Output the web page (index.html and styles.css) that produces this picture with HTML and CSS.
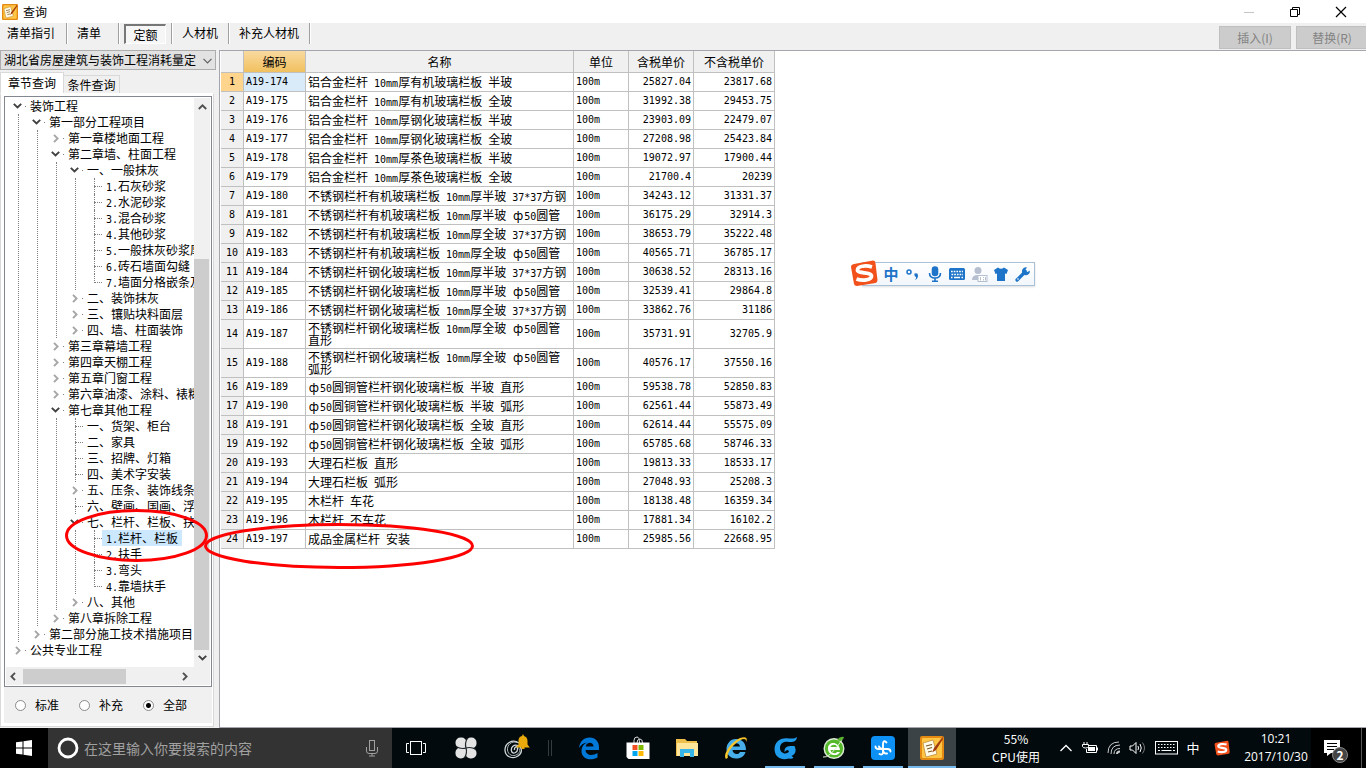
FILE: index.html
```html
<!DOCTYPE html>
<html lang="zh-CN">
<head>
<meta charset="utf-8">
<title>查询</title>
<link rel="stylesheet" href="styles.css">
</head>
<body>
<svg class="defs" aria-hidden="true">
  <symbol id="open" viewBox="0 0 9 6"><path d="M0.8 0.9 4.5 4.5 8.2 0.9" fill="none" stroke="#404040" stroke-width="1.9"/></symbol>
  <symbol id="shut" viewBox="0 0 6 9"><path d="M1 0.8 4.6 4.5 1 8.2" fill="none" stroke="#a6a6a6" stroke-width="1.9"/></symbol>
  <symbol id="sogou" viewBox="0 0 28 28"><path d="M4 5 23 1.5Q25 1.500 25.400 3.500L27.500 21Q27.500 23.500 25.500 24L7 27Q4.500 27 4 25L1 8Q1 5.500 4 5Z" fill="#f2511b"/><path d="M22 8C16 6 7.500 7 7.500 11 7.500 15 21.500 12.500 21.500 17 21.500 21.500 12 22 6.500 20" fill="none" stroke="#fff" stroke-width="3.800"/></symbol>
  <symbol id="note" viewBox="0 0 24 24"><rect width="24" height="24" rx="2" fill="#e48a12"/><rect x="2" y="2" width="20" height="20" rx="1" fill="#ffc545"/><path d="M3 7 13 4 17 18 6 21Z" fill="#fffbe9" stroke="#a8701f" stroke-width=".6"/><path d="M6 10 12 8.500M7 13 12 11.500M8 16 12 15" stroke="#7d5a2a" stroke-width="1.100"/><path d="M22.500 1 14 12 12 16.500 16 14 23 3Z" fill="#a33c0c"/></symbol>
</svg>

<header class="titlebar">
  <svg class="app-icon"><use href="#note"/></svg>
  <h1>查询</h1>
  <div class="window-buttons">
    <button aria-label="最小化"><svg width="12" height="12"><path d="M1 6.500H11" stroke="#c4c4c4"/></svg></button>
    <button aria-label="还原"><svg width="12" height="12" fill="none" stroke="#000"><path d="M3.500 3V1.500H10.500V8.500H9M1.500 3.500H8.500V10.500H1.500Z"/></svg></button>
    <button aria-label="关闭"><svg width="12" height="12"><path d="M1 1 11 11M11 1 1 11" stroke="#000" stroke-width="1.200"/></svg></button>
  </div>
</header>

<nav class="toolbar">
  <div class="cell"><button>清单指引</button></div>
  <div class="cell"><button>清单</button></div>
  <div class="cell"><button class="pressed">定额</button></div>
  <div class="cell"><button>人材机</button></div>
  <div class="cell"><button>补充人材机</button></div>
  <div class="actions"><button disabled>插入(I)</button><button disabled>替换(R)</button></div>
</nav>

<main>
<aside>
  <div class="combo">
    <select aria-label="定额库"><option>湖北省房屋建筑与装饰工程消耗量定</option></select>
    <svg class="combo-arrow" viewBox="0 0 9 6"><path d="M0.500 0.800 4.500 4.800 8.500 0.800" fill="none" stroke="#606060" stroke-width="1.200"/></svg>
  </div>
  <div class="tabs"><button class="active">章节查询</button><button>条件查询</button></div>
  <section class="page">
    <div class="tree-box">
      <div class="tree">
      <ul>
        <li><div class="row"><i><svg class="o"><use href="#open"/></svg></i><span>装饰工程</span></div>
          <ul>
            <li><div class="row"><i><svg class="o"><use href="#open"/></svg></i><span>第一部分工程项目</span></div>
              <ul>
                <li><div class="row"><i><svg class="s"><use href="#shut"/></svg></i><span>第一章楼地面工程</span></div></li>
                <li><div class="row"><i><svg class="o"><use href="#open"/></svg></i><span>第二章墙、柱面工程</span></div>
                  <ul>
                    <li><div class="row"><i><svg class="o"><use href="#open"/></svg></i><span>一、一般抹灰</span></div>
                      <ul>
                        <li class="leaf"><div class="row"><i></i><span><b>1.</b>石灰砂浆</span></div></li>
                        <li class="leaf"><div class="row"><i></i><span><b>2.</b>水泥砂浆</span></div></li>
                        <li class="leaf"><div class="row"><i></i><span><b>3.</b>混合砂浆</span></div></li>
                        <li class="leaf"><div class="row"><i></i><span><b>4.</b>其他砂浆</span></div></li>
                        <li class="leaf"><div class="row"><i></i><span><b>5.</b>一般抹灰砂浆厚</span></div></li>
                        <li class="leaf"><div class="row"><i></i><span><b>6.</b>砖石墙面勾缝</span></div></li>
                        <li class="leaf"><div class="row"><i></i><span><b>7.</b>墙面分格嵌条及</span></div></li>
                      </ul></li>
                    <li><div class="row"><i><svg class="s"><use href="#shut"/></svg></i><span>二、装饰抹灰</span></div></li>
                    <li><div class="row"><i><svg class="s"><use href="#shut"/></svg></i><span>三、镶贴块料面层</span></div></li>
                    <li><div class="row"><i><svg class="s"><use href="#shut"/></svg></i><span>四、墙、柱面装饰</span></div></li>
                  </ul></li>
                <li><div class="row"><i><svg class="s"><use href="#shut"/></svg></i><span>第三章幕墙工程</span></div></li>
                <li><div class="row"><i><svg class="s"><use href="#shut"/></svg></i><span>第四章天棚工程</span></div></li>
                <li><div class="row"><i><svg class="s"><use href="#shut"/></svg></i><span>第五章门窗工程</span></div></li>
                <li><div class="row"><i><svg class="s"><use href="#shut"/></svg></i><span>第六章油漆、涂料、裱糊</span></div></li>
                <li><div class="row"><i><svg class="o"><use href="#open"/></svg></i><span>第七章其他工程</span></div>
                  <ul>
                    <li class="leaf"><div class="row"><i></i><span>一、货架、柜台</span></div></li>
                    <li class="leaf"><div class="row"><i></i><span>二、家具</span></div></li>
                    <li class="leaf"><div class="row"><i></i><span>三、招牌、灯箱</span></div></li>
                    <li class="leaf"><div class="row"><i></i><span>四、美术字安装</span></div></li>
                    <li><div class="row"><i><svg class="s"><use href="#shut"/></svg></i><span>五、压条、装饰线条</span></div></li>
                    <li class="leaf"><div class="row"><i></i><span>六、壁画、国画、浮</span></div></li>
                    <li><div class="row"><i><svg class="o"><use href="#open"/></svg></i><span>七、栏杆、栏板、扶</span></div>
                      <ul>
                        <li class="leaf"><div class="row"><i></i><span class="selected"><b>1.</b>栏杆、栏板</span></div></li>
                        <li class="leaf"><div class="row"><i></i><span><b>2.</b>扶手</span></div></li>
                        <li class="leaf"><div class="row"><i></i><span><b>3.</b>弯头</span></div></li>
                        <li class="leaf"><div class="row"><i></i><span><b>4.</b>靠墙扶手</span></div></li>
                      </ul></li>
                    <li><div class="row"><i><svg class="s"><use href="#shut"/></svg></i><span>八、其他</span></div></li>
                  </ul></li>
                <li><div class="row"><i><svg class="s"><use href="#shut"/></svg></i><span>第八章拆除工程</span></div></li>
              </ul></li>
            <li><div class="row"><i><svg class="s"><use href="#shut"/></svg></i><span>第二部分施工技术措施项目</span></div></li>
          </ul></li>
        <li><div class="row"><i><svg class="s"><use href="#shut"/></svg></i><span>公共专业工程</span></div></li>
      </ul>
      </div>
      <div class="vbar">
        <svg width="9" height="6"><path d="M0.800 5 4.500 1.400 8.200 5" fill="none" stroke="#505050" stroke-width="1.900"/></svg>
        <div class="vtrack"><div class="vthumb"></div></div>
        <svg width="9" height="6"><use href="#open"/></svg>
      </div>
      <div class="hbar">
        <svg width="6" height="9"><path d="M5 0.800 1.400 4.500 5 8.200" fill="none" stroke="#505050" stroke-width="1.900"/></svg>
        <div class="htrack"><div class="hthumb"></div></div>
        <svg width="6" height="9"><path d="M1 0.800 4.600 4.500 1 8.200" fill="none" stroke="#505050" stroke-width="1.900"/></svg>
      </div>
    </div>
    <div class="radios">
      <label><input type="radio" name="kind">标准</label>
      <label><input type="radio" name="kind">补充</label>
      <label><input type="radio" name="kind" checked>全部</label>
    </div>
  </section>
</aside>

<section class="content">
  <table>
    <colgroup><col class="c-no"><col class="c-code"><col class="c-name"><col class="c-unit"><col class="c-tax"><col class="c-net"></colgroup>
    <thead><tr><th></th><th class="current">编码</th><th>名称</th><th>单位</th><th>含税单价</th><th>不含税单价</th></tr></thead>
    <tbody>
      <tr class="current"><th>1</th><td>A19-174</td><td>铝合金栏杆<b> 10mm</b>厚有机玻璃栏板<b> </b>半玻</td><td>100m</td><td>25827.04</td><td>23817.68</td></tr>
      <tr><th>2</th><td>A19-175</td><td>铝合金栏杆<b> 10mm</b>厚有机玻璃栏板<b> </b>全玻</td><td>100m</td><td>31992.38</td><td>29453.75</td></tr>
      <tr><th>3</th><td>A19-176</td><td>铝合金栏杆<b> 10mm</b>厚钢化玻璃栏板<b> </b>半玻</td><td>100m</td><td>23903.09</td><td>22479.07</td></tr>
      <tr><th>4</th><td>A19-177</td><td>铝合金栏杆<b> 10mm</b>厚钢化玻璃栏板<b> </b>全玻</td><td>100m</td><td>27208.98</td><td>25423.84</td></tr>
      <tr><th>5</th><td>A19-178</td><td>铝合金栏杆<b> 10mm</b>厚茶色玻璃栏板<b> </b>半玻</td><td>100m</td><td>19072.97</td><td>17900.44</td></tr>
      <tr><th>6</th><td>A19-179</td><td>铝合金栏杆<b> 10mm</b>厚茶色玻璃栏板<b> </b>全玻</td><td>100m</td><td>21700.4</td><td>20239</td></tr>
      <tr><th>7</th><td>A19-180</td><td>不锈钢栏杆有机玻璃栏板<b> 10mm</b>厚半玻<b> 37*37</b>方钢</td><td>100m</td><td>34243.12</td><td>31331.37</td></tr>
      <tr><th>8</th><td>A19-181</td><td>不锈钢栏杆有机玻璃栏板<b> 10mm</b>厚半玻<b> </b><em>ф</em><b>50</b>圆管</td><td>100m</td><td>36175.29</td><td>32914.3</td></tr>
      <tr><th>9</th><td>A19-182</td><td>不锈钢栏杆有机玻璃栏板<b> 10mm</b>厚全玻<b> 37*37</b>方钢</td><td>100m</td><td>38653.79</td><td>35222.48</td></tr>
      <tr><th>10</th><td>A19-183</td><td>不锈钢栏杆有机玻璃栏板<b> 10mm</b>厚全玻<b> </b><em>ф</em><b>50</b>圆管</td><td>100m</td><td>40565.71</td><td>36785.17</td></tr>
      <tr><th>11</th><td>A19-184</td><td>不锈钢栏杆钢化玻璃栏板<b> 10mm</b>厚半玻<b> 37*37</b>方钢</td><td>100m</td><td>30638.52</td><td>28313.16</td></tr>
      <tr><th>12</th><td>A19-185</td><td>不锈钢栏杆钢化玻璃栏板<b> 10mm</b>厚半玻<b> </b><em>ф</em><b>50</b>圆管</td><td>100m</td><td>32539.41</td><td>29864.8</td></tr>
      <tr><th>13</th><td>A19-186</td><td>不锈钢栏杆钢化玻璃栏板<b> 10mm</b>厚全玻<b> 37*37</b>方钢</td><td>100m</td><td>33862.76</td><td>31186</td></tr>
      <tr class="tall"><th>14</th><td>A19-187</td><td>不锈钢栏杆钢化玻璃栏板<b> 10mm</b>厚全玻<b> </b><em>ф</em><b>50</b>圆管<br>直形</td><td>100m</td><td>35731.91</td><td>32705.9</td></tr>
      <tr class="tall"><th>15</th><td>A19-188</td><td>不锈钢栏杆钢化玻璃栏板<b> 10mm</b>厚全玻<b> </b><em>ф</em><b>50</b>圆管<br>弧形</td><td>100m</td><td>40576.17</td><td>37550.16</td></tr>
      <tr><th>16</th><td>A19-189</td><td><em>ф</em><b>50</b>圆铜管栏杆钢化玻璃栏板<b> </b>半玻<b> </b>直形</td><td>100m</td><td>59538.78</td><td>52850.83</td></tr>
      <tr><th>17</th><td>A19-190</td><td><em>ф</em><b>50</b>圆铜管栏杆钢化玻璃栏板<b> </b>半玻<b> </b>弧形</td><td>100m</td><td>62561.44</td><td>55873.49</td></tr>
      <tr><th>18</th><td>A19-191</td><td><em>ф</em><b>50</b>圆铜管栏杆钢化玻璃栏板<b> </b>全玻<b> </b>直形</td><td>100m</td><td>62614.44</td><td>55575.09</td></tr>
      <tr><th>19</th><td>A19-192</td><td><em>ф</em><b>50</b>圆铜管栏杆钢化玻璃栏板<b> </b>全玻<b> </b>弧形</td><td>100m</td><td>65785.68</td><td>58746.33</td></tr>
      <tr><th>20</th><td>A19-193</td><td>大理石栏板<b> </b>直形</td><td>100m</td><td>19813.33</td><td>18533.17</td></tr>
      <tr><th>21</th><td>A19-194</td><td>大理石栏板<b> </b>弧形</td><td>100m</td><td>27048.93</td><td>25208.3</td></tr>
      <tr><th>22</th><td>A19-195</td><td>木栏杆<b> </b>车花</td><td>100m</td><td>18138.48</td><td>16359.34</td></tr>
      <tr><th>23</th><td>A19-196</td><td>木栏杆<b> </b>不车花</td><td>100m</td><td>17881.34</td><td>16102.2</td></tr>
      <tr><th>24</th><td>A19-197</td><td>成品金属栏杆<b> </b>安装</td><td>100m</td><td>25985.56</td><td>22668.95</td></tr>
    </tbody>
  </table>
</section>
</main>

<svg class="marks" width="480" height="580" fill="none" stroke="#f00" stroke-width="3" aria-hidden="true"><ellipse cx="136.500" cy="535.500" rx="70" ry="25"/><ellipse cx="339" cy="546" rx="133.500" ry="21.500"/></svg>

<div class="ime">
  <svg class="ime-logo"><use href="#sogou"/></svg>
  <button class="ime-zh">中</button>
  <button aria-label="标点"><svg width="16" height="16"><circle cx="4" cy="6" r="2" fill="none" stroke="#1e74c8" stroke-width="1.500"/><path d="M9.500 7.500Q13 6.500 13 9.500 13 12.500 10 14 11.500 12 11 11 9 10.500 9.500 7.500Z" fill="#1e74c8"/></svg></button>
  <button aria-label="语音"><svg width="16" height="16" fill="none" stroke="#1e74c8" stroke-width="1.600"><rect x="5.500" y="1" width="5" height="8.500" rx="2.500" fill="#1e74c8"/><path d="M2.500 7Q2.500 12 8 12T13.500 7M8 12V15M5 15.200H11"/></svg></button>
  <button aria-label="键盘"><svg width="16" height="16"><rect y="2" width="16" height="12" rx="1.500" fill="#1e74c8"/><path d="M2 5.500H14M2.500 8.500H14" stroke="#fff" stroke-width="1.700" stroke-dasharray="1.700 1"/><path d="M2 11.500H3.500M5 11.500H11M12.500 11.500H14" stroke="#fff" stroke-width="1.300"/></svg></button>
  <button aria-label="用户"><svg width="17" height="16" fill="#b5bfd0"><circle cx="7" cy="4.500" r="3.500"/><path d="M1 14Q1 9 7 9 10 9 12 11V14Z"/><rect x="7" y="9.500" width="9" height="6" fill="#fff" stroke="#b5bfd0"/><path d="M9.500 11V14.500M12.500 11V12M12.500 13V14.500M14.500 11V14.500" stroke="#b5bfd0"/></svg></button>
  <button aria-label="皮肤"><svg width="16" height="16"><path d="M5 1.500Q8 4 11 1.500L15 4 13.500 8 12 7.500V15H4V7.500L2.500 8 1 4Z" fill="#1e74c8"/></svg></button>
  <button aria-label="工具"><svg width="16" height="16"><path d="M2 14 9 7" stroke="#1e74c8" stroke-width="3.200" stroke-linecap="round"/><path d="M13.800 2.800 11.500 5 12.500 6 14.800 4.500A4 4 0 1 1 12 1.500L10.500 4" fill="#1e74c8"/><path d="M14.500 1 11.500 4.300" stroke="#fafcff" stroke-width="2.300"/><circle cx="3" cy="13" r=".8" fill="#fff"/></svg></button>
</div>

<footer class="taskbar">
  <button class="start" aria-label="开始"><svg width="16" height="16" fill="#fff"><path d="M0 2.300 6.500 1.400V7.500H0ZM7.500 1.200 16 0V7.500H7.500ZM0 8.500H6.500V14.600L0 13.700ZM7.500 8.500H16V16L7.500 14.800Z"/></svg></button>
  <div class="search">
    <svg width="22" height="22"><circle cx="11" cy="11" r="9" fill="none" stroke="#fff" stroke-width="2.800"/></svg>
    <input type="text" aria-label="搜索" placeholder="在这里输入你要搜索的内容">
    <svg width="12" height="18" fill="none" stroke="#a0a0a0"><rect x="3.500" y="1.500" width="5" height="10"/><path d="M0.500 8V12Q0.500 14.500 3 14.500H9Q11.500 14.500 11.500 12V8M6 14.500V17M3 17H9"/></svg>
  </div>
  <div class="group first">
    <button aria-label="任务视图"><svg width="20" height="16" fill="none" stroke="#fff"><rect x="4.500" y="1.500" width="11" height="13"/><path d="M3 3.500H.5V12.500H3M17 3.500H19.500V12.500H17"/></svg></button>
    <button aria-label="应用"><svg width="22" height="22"><g fill="#e4e4e4"><rect x=".5" y=".5" width="11" height="10.500" rx="5"/><rect x="11" y=".5" width="10.500" height="11" rx="5"/><rect x="10.500" y="11" width="11" height="10.500" rx="5"/><rect x=".5" y="10.500" width="10.500" height="11" rx="5"/><rect x="7" y="7" width="8" height="8"/></g><path d="M11 11Q6 12.500 1 9.500M11 11Q9.500 6 12.500 1M11 11Q16 9.500 21 12.500M11 11Q12.500 16 9.500 21" fill="none" stroke="#20272a" stroke-width="1.200"/></svg></button>
    <button aria-label="提醒"><svg width="28" height="28" fill="none"><path d="M17 9C10 4 2.500 10 3 16.500S11 25.500 16 22 20 13 16 11.500 8.500 13 9.500 17 16 18.500 15.500 14.500 12 14 12.500 16" stroke="#d5dada" stroke-width="1.300"/><path d="M15 8.500C9.500 6.500 5 11 5.500 16S11 23 15 20.500 18 14.500 15.500 13" stroke="#aeb5b5"/><path d="M14 13.500 16.500 10.500V6Q17 2.500 20 2L21 0 22 2Q25.500 3 25.500 7V10.500L27.800 13.500H22.500V15H19.500V13.500Z" fill="#e8ab0b"/></svg></button>
  </div>
  <div class="grip"></div>
  <div class="group">
    <button aria-label="Edge"><svg width="22" height="24"><path d="M1 12C2 5 6 1.500 11.500 1.500 18 1.500 21 6.500 21 11V14H7.500C8 20 15 20 19.500 17V21.500C13 25 3.500 23.500 3.500 15 3.500 11 5.500 8 9 6.500 5 7 3 9 1 12ZM7.700 10.500H15.500C15.500 5.500 8.500 5.500 7.700 10.500Z" fill="#0078d7" fill-rule="evenodd"/></svg></button>
    <button aria-label="应用商店"><svg width="24" height="24"><path d="M8 7V4.500Q8 1 11 1 13.500 1 13.500 7M11 7Q11 3 14 3 16.500 3 16.500 7" fill="none" stroke="#ddd"/><path d="M.5 6.500H23.500V23H2.500L.5 21Z" fill="#fff"/><path d="M6.500 9H11.500V14H6.500Z" fill="#f25022"/><path d="M12.500 9H17.500V14H12.500Z" fill="#7fba00"/><path d="M6.500 15H11.500V20H6.500Z" fill="#00a4ef"/><path d="M12.500 15H17.500V20H12.500Z" fill="#ffb900"/></svg></button>
    <button aria-label="文件资源管理器"><svg width="22" height="20"><path d="M0 1H9L11 3H21V18H0Z" fill="#eebf4b"/><path d="M1 5H22V18H1Z" fill="#ffe69a"/><path d="M4 19V11H18V19H14V15H8V19Z" fill="#37b5e8"/></svg></button>
    <button aria-label="Internet Explorer"><svg width="26" height="26"><path d="M13 4C20 4 23 9 23 15H9.500C10 20 16 20 17 17H22.500C21 22 17 23.500 13 23.500 7 23.500 3.500 19 3.500 14S7 4 13 4ZM9.500 11.500H17C16.500 7 10 7 9.500 11.500Z" fill="#48aee9" fill-rule="evenodd"/><path d="M3 24C-1 20 8 7 17 3 23 1 25 3 23 7 23.500 4 21.500 3 17.500 5 10 9 3 19 5 22.500Z" fill="#f6c52c"/></svg></button>
    <button class="run" aria-label="浏览器"><svg width="25" height="24"><path d="M24 1C23.500 5.500 20 6.500 16 6 10 5 7 8 7 12 7 17 13 19.500 16 15.500L15 14Q13 14 11.500 16 11 10.500 17 10H21.500C24 15 22 18.500 18.500 20L20.500 21.500Q19 23.500 16 22.500 6 25 2.500 18C-.5 10 4 3 11 2.500 16 1.500 20 4 24 1Z" fill="#209cec"/></svg></button>
    <button class="run" aria-label="360浏览器"><svg width="24" height="24"><circle cx="12" cy="12.500" r="9.800" fill="#55b92b" stroke="#dcebd3" stroke-width="1.400"/><path d="M18 14H8.500C9 18 14 18 15 16H18C16 21 6 20 6 12.500S17 5 18 14ZM8.500 11H15C14.500 8 9.500 8 8.500 11Z" fill="#fff" fill-rule="evenodd"/><path d="M1 21Q7 23 20 4" fill="none" stroke="#d9f2cc"/><path d="M15 4Q18 0 22 1 21 5 17 5Z" fill="#59b52f"/></svg></button>
    <button class="run" aria-label="云应用"><svg width="24" height="24"><rect width="24" height="24" rx="4" fill="#0d91f5"/><path d="M15.500 6.500Q12 3.500 12 8V16Q12 19.500 8.500 18M4.500 10.500Q4.500 13 7.500 13H16.500Q19.500 13 19.500 15.500M8 10.500Q8.500 13 12 13M12 13Q12 18 16 17.500" fill="none" stroke="#fff" stroke-width="1.900" stroke-linecap="round"/></svg></button>
    <button class="run active" aria-label="查询"><svg width="24" height="24"><use href="#note"/></svg></button>
  </div>
  <div class="tray">
    <div class="cpu">55%<br>CPU使用</div>
    <button class="w22" aria-label="显示隐藏的图标"><svg width="12" height="8"><path d="M.5 7 6 1.500 11.500 7" fill="none" stroke="#fff" stroke-width="1.300"/></svg></button>
    <button class="w26" aria-label="电源"><svg width="16" height="14" fill="none" stroke="#fff"><path d="M6.500 4.500H14.500V11.500H4.500V8M15.500 6.500V9.500M2 1V3M5 1V3M.5 3.500H6.500V5.500Q6 7 3.500 7T.5 5.500Z"/><path d="M6 8H13" stroke-width="4"/></svg></button>
    <button class="w22" aria-label="网络"><svg width="14" height="14" fill="none" stroke="#ccc"><path d="M1 12Q1 1 12 1M4 13Q4 4 13 4M7 13Q7 7.500 13 7.500"/><path d="M10 13Q10 10.500 13 10.500" stroke-width="2"/></svg></button>
    <button class="w24" aria-label="音量"><svg width="17" height="14" fill="none" stroke="#fff"><path d="M1 5H3.500L7 1.500V12.500L3.500 9H1ZM9 5Q10 7 9 9M11 3Q13.500 7 11 11"/><path d="M13.500 1.500Q17.500 7 13.500 12.500" stroke="#777"/></svg></button>
    <button class="w34" aria-label="触摸键盘"><svg width="23" height="14" fill="none" stroke="#fff"><rect x=".5" y=".5" width="22" height="12.500"/><path d="M3 3.500H20M3 6.500H20" stroke-dasharray="1.500 1.500"/><path d="M3 9.500H5M6.500 9.500H16.500M18 9.500H20"/></svg></button>
    <button class="w20 zh">中</button>
    <button class="w38" aria-label="搜狗输入法"><svg width="16" height="16"><use href="#sogou"/></svg></button>
    <div class="clock">10:21<br>2017/10/30</div>
    <button class="notify" aria-label="通知"><svg width="24" height="16"><path d="M0 0H16V13H7L3 16V13H0Z" fill="#fff"/><path d="M3 3.500H13M3 6.500H13M3 9.500H10" stroke="#000"/></svg><span class="badge">2</span></button>
    <div class="peek"></div>
  </div>
</footer>
</body>
</html>
```
FILE: styles.css
```css
* { box-sizing: border-box; }
body {
  margin: 0;
  height: 100vh;
  display: flex;
  flex-direction: column;
  overflow: hidden;
  position: relative;
  background: #f0f0f0;
  color: #000;
  font: 12px/16px "Noto Sans CJK SC", sans-serif;
}
button, input, select { font: inherit; color: inherit; border: 0; padding: 0; background: none; border-radius: 0; }
svg { display: block; flex: none; }
ul { list-style: none; margin: 0; padding: 0; }
b { font: 10px/8px "DejaVu Sans Mono", monospace; white-space: pre; }
em { display: inline-block; width: 12px; text-align: center; font: 12px/8px "DejaVu Sans", sans-serif; }
.defs { position: absolute; width: 0; height: 0; }

.titlebar { flex: none; height: 23px; display: flex; align-items: center; background: #fff; padding: 0 2px; }
.app-icon { width: 16px; height: 16px; }
.titlebar h1 { margin: 0 0 0 5px; font-size: 12px; font-weight: 400; flex: 1; }
.window-buttons { display: flex; }
.window-buttons button { width: 46px; height: 20px; display: grid; place-items: center; }

.toolbar { flex: none; height: 27px; display: flex; align-items: flex-start; }
.cell { height: 21px; padding: 0 11px 0 7px; border-right: 1px solid #a0a0a0; box-shadow: 1px 0 #fff; }
.cell + .cell { padding: 0 10px; }
.cell button { height: 20px; line-height: 20px; }
.cell + .cell:nth-child(2) { padding-right: 17px; }
.cell + .cell:nth-child(3) { padding: 0 5px; }
.cell .pressed { width: 42px; margin-top: 1px; border: 1px solid #fff; border-top: 2px solid #777; border-left: 2px solid #777; background: #f6f6f6; line-height: 16px; }
.actions { margin: 0 -2px 0 auto; padding-top: 3px; display: flex; gap: 5px; }
.actions button { width: 72px; height: 23px; background: #ccc; border: 1px solid #bfbfbf; color: #838383; }

main { flex: 1; min-height: 0; display: flex; }
aside { width: 219px; flex: none; display: flex; flex-direction: column; padding-bottom: 1px; }
.combo { position: relative; margin-right: 3px; height: 20px; }
.combo select { appearance: none; display: block; width: 100%; height: 20px; padding: 0 18px 0 3px; background: #e2e2e2; border: 1px solid #adadad; }
.combo-arrow { position: absolute; right: 4px; top: 8px; width: 9px; height: 6px; }
.tabs { display: flex; align-items: flex-end; padding-top: 2px; height: 23px; }
.tabs button { width: 56px; height: 18px; background: #f0f0f0; border: 1px solid #d9d9d9; border-width: 1px 1px 0 0; }
.tabs .active { width: 64px; height: 21px; background: #fff; border-left-width: 1px; }
.page { flex: 1; min-height: 0; margin-right: 5px; padding: 2px 1px 3px 3px; border: 1px solid #d9d9d9; border-top-color: #fff; background: #fff; display: flex; flex-direction: column; }
.tree-box { flex: 1; min-height: 0; border: 1px solid #828790; padding: 1px; display: grid; grid-template: 1fr 18px / 1fr 16px; background: #fff; }
.tree { overflow: hidden; padding-left: 3px; }
.tree ul ul { margin-left: 9px; padding-left: 9px; border-left: 1px dotted transparent; }
.tree li:not(:last-child) > ul { border-left-color: #808080; }
.row { display: flex; height: 16px; white-space: nowrap; }
.row i { position: relative; flex: none; width: 17px; display: grid; place-items: center; }
.row i::after { content: ""; position: absolute; right: 0; top: 8px; width: 1px; border-top: 1px dotted #808080; }
.row span { padding: 0 4px; line-height: 16px; }
.row .o { width: 9px; height: 6px; }
.row .s { width: 6px; height: 9px; }
.leaf i::before { content: ""; position: absolute; left: 9px; top: 0; bottom: 0; border-left: 1px dotted #808080; }
.leaf:last-child i::before { bottom: 7px; }
.leaf i::after { width: 8px; }
.row .selected { background: #cce8ff; }
.vbar { background: #f0f0f0; display: flex; flex-direction: column; align-items: center; padding: 6px 0; }
.vtrack { flex: 1; width: 100%; margin: 5px 0; display: flex; flex-direction: column; justify-content: flex-end; }
.vthumb { height: 73%; width: 15px; background: #cdcdcd; }
.hbar { grid-column: 1 / 3; background: #f0f0f0; display: flex; align-items: center; padding: 0 22px 0 4px; }
.htrack { flex: 1; height: 15px; margin: 0 7px; }
.hthumb { height: 100%; width: 68%; background: #cdcdcd; }
.radios { flex: none; display: flex; gap: 20px; align-items: center; height: 36px; padding-left: 11px; background: #f0f0f0; }
.radios label { display: flex; align-items: center; gap: 9px; }
.radios input { appearance: none; margin: 0; width: 11px; height: 11px; border: 1px solid #8a8a8a; border-radius: 50%; background: #fff; }
.radios input:checked { background: radial-gradient(circle, #000 2px, #fff 3px); }

.content { flex: 1; min-width: 0; overflow: hidden; background: #fff; border: 1px solid #a5a5ad; border-right: 0; padding-left: 1px; }
table { table-layout: fixed; width: 554px; border-collapse: separate; border-spacing: 0; line-height: 12px; }
.c-no { width: 23px; } .c-code { width: 62px; } .c-name { width: 268px; } .c-unit { width: 55px; } .c-tax { width: 65px; } .c-net { width: 81px; }
th, td { height: 19px; padding: 0 2px; border: 1px solid #c0c0c0; border-width: 0 1px 1px 0; white-space: nowrap; }
th { font-weight: 400; background: #f0f0f0; text-align: center; }
thead th { height: 22px; }
thead .current { background: linear-gradient(#f9d99f, #f1c15f); }
.current th { background: #ffd58d; }
tbody th, td:nth-child(2), td:nth-child(n+4) { font-family: "DejaVu Sans Mono", monospace; font-size: 10px; }
td:nth-child(n+5) { text-align: right; }
.current td:nth-child(2) { background: #d9eaf9; }
.tall td, .tall th { height: 29px; }

.marks { position: absolute; left: 0; top: 0; pointer-events: none; }
.ime { position: absolute; left: 862px; top: 262px; width: 173px; height: 24px; padding-left: 17px; display: flex; align-items: center; border: 1px solid #a9c1d8; background: linear-gradient(#fff, #f2f7fc); box-shadow: 0 1px 2px #ddd; }
.ime button { flex: 1; display: grid; place-items: center; color: #1e74c8; }
.ime .ime-zh { font-size: 15px; font-weight: 700; }
.ime-logo { position: absolute; left: -13px; top: -4px; width: 28px; height: 28px; }

.taskbar { flex: none; height: 40px; display: flex; background: #020a0d; color: #fff; }
.taskbar button { display: grid; place-items: center; }
.start { width: 48px; background: #000; }
.search { width: 344px; background: #333; display: flex; align-items: center; padding: 0 14px 0 9px; }
.search input { flex: 1; min-width: 0; margin: 0 5px; font-size: 14px; line-height: 20px; }
.search input::placeholder { color: #a0a0a0; opacity: 1; }
.group { display: flex; gap: 1px; }
.group.first { gap: 2px; }
.group button { width: 48px; position: relative; }
.grip { width: 4px; height: 16px; margin: 12px 13px 0 8px; border: 1px solid #333c3f; border-width: 0 1px; }
.run::after { content: ""; position: absolute; left: 4px; right: 4px; bottom: 0; height: 2px; background: #76b9ed; }
.run.active { background: #3b4346; }
.run.active::after { left: 0; right: 0; }
.tray { margin-left: auto; display: flex; text-align: center; line-height: 18px; }
.cpu { width: 78px; padding-top: 2px; }
.clock { width: 70px; padding-top: 2px; font-family: "Open Sans", sans-serif; }
.w20 { width: 20px; } .w22 { width: 22px; } .w24 { width: 24px; } .w26 { width: 26px; } .w34 { width: 34px; } .w38 { width: 38px; }
.zh { font-size: 13px; }
.notify { position: relative; width: 50px; background: #000; }
.badge { position: absolute; left: 21px; top: 19px; width: 16px; height: 16px; border-radius: 50%; background: #444; border: 1px solid #888; line-height: 14px; font-weight: 700; }
.peek { width: 5px; border-left: 1px solid #555; background: #000; }
```
